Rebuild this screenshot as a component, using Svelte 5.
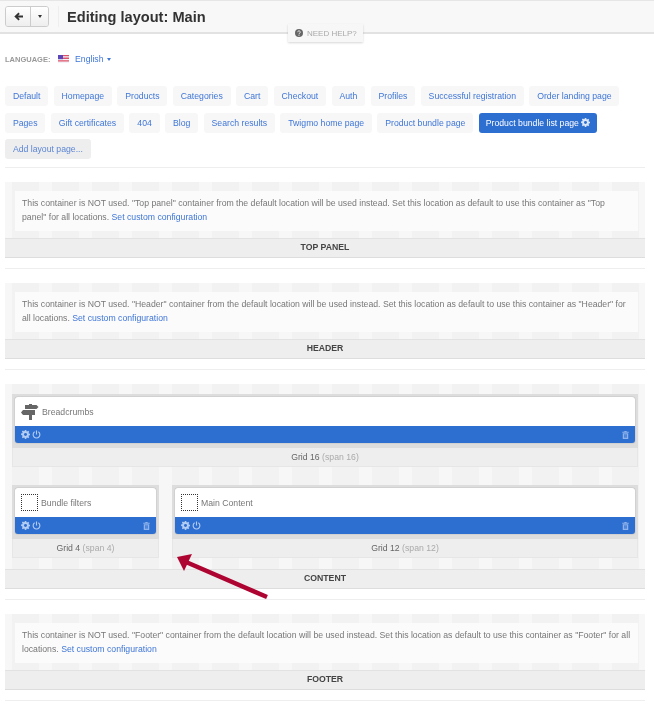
<script>
  const tabs = [
    "Default", "Homepage", "Products", "Categories", "Cart", "Checkout", "Auth", "Profiles",
    "Successful registration", "Order landing page", "Pages", "Gift certificates", "404",
    "Blog", "Search results", "Twigmo home page", "Product bundle page"
  ];
</script>

{#snippet cog(size = 9)}
  <svg class="icon" width={size} height={size} viewBox="0 0 16 16" aria-hidden="true">
    <path fill="currentColor" d="M6.600 0h2.800l.4 2.400 1.300.6 2-1.400 2 2-1.400 2 .6 1.300 2.400.4v2.800l-2.400.4-.6 1.300 1.400 2-2 2-2-1.400-1.300.6-.4 2.400H6.600l-.4-2.400-1.300-.6-2 1.400-2-2 1.400-2-.6-1.300L-.7 9.400v-2.800l2.400-.4.6-1.300-1.400-2 2-2 2 1.400 1.300-.6z" transform="translate(.7 0) scale(.92)"/>
    <circle cx="8" cy="8" r="2.600" class="hole"/>
  </svg>
{/snippet}

{#snippet power()}
  <svg class="icon" width="9" height="9" viewBox="0 0 16 16" aria-hidden="true">
    <path d="M4.700 3.200a6 6 0 1 0 6.600 0M8 .8v7" fill="none" stroke="currentColor" stroke-width="2"/>
  </svg>
{/snippet}

{#snippet trash()}
  <svg class="icon trash" width="7" height="8" viewBox="0 0 14 16" aria-hidden="true">
    <path fill="currentColor" d="M5 0h4l.6 1.500H13.500V3.500H.5V1.500H4.400zM1.500 4.500h11V16h-11zM4 6.500v7h1.300v-7zM6.400 6.500v7h1.200v-7zM8.700 6.500v7H10v-7z" fill-rule="evenodd"/>
  </svg>
{/snippet}

{#snippet block(name, wide = false)}
  <div class="block">
    <div class="block-body">
      {#if wide}
        <svg class="signpost" width="18" height="18" viewBox="0 0 18 18" aria-hidden="true">
          <path fill="#666" d="M8 1h3v1h4.500L17.500 4 15.500 6H4V2h4zM2 7h12v5H11v5H8v-5H2L0 9.500z"/>
        </svg>
      {:else}
        <span class="placeholder"></span>
      {/if}
      <span>{name}</span>
    </div>
    <div class="block-bar">
      {@render cog()}
      {@render power()}
      <span class="spacer"></span>
      {@render trash()}
    </div>
  </div>
{/snippet}

{#snippet unused(title)}
  <section class="container">
    <p class="notice">This container is NOT used. "{title}" container from the default location will be used instead. Set this location as default to use this container as "{title}" for all locations. <a href="#custom">Set custom configuration</a></p>
  </section>
  <div class="bar">{title}</div>
{/snippet}

<div class="page">
  <header class="topbar">
    <div class="btn-group">
      <button class="btn back" aria-label="Back">
        <svg width="9" height="9" viewBox="0 0 12 12"><path fill="#333" d="M6 0.800l1.700 1.700L5.400 4.800H12v2.600H5.400l2.300 2.300L6 11.400.4 6z"/></svg>
      </button>
      <button class="btn more" aria-label="More"><span class="caret dark"></span></button>
    </div>
    <h1>Editing layout: Main</h1>
  </header>

  <div class="help">
    <svg width="8" height="8" viewBox="0 0 16 16" aria-hidden="true">
      <circle cx="8" cy="8" r="8" fill="#666"/>
      <path d="M5.400 6.200a2.600 2.400 0 1 1 3.900 2.100c-.9.500-1.300.9-1.300 1.900" fill="none" stroke="#f7f7f7" stroke-width="1.800"/>
      <rect x="7" y="11.400" width="2" height="2" fill="#f7f7f7"/>
    </svg>
    NEED HELP?
  </div>

  <div class="language">
    <span class="lang-label">LANGUAGE:</span>
    <svg class="flag" width="11" height="8" viewBox="0 0 11 8" aria-hidden="true">
      <rect width="11" height="8" fill="#f2f2f6"/>
      <path d="M0 0h11v1.300H0zM0 2.600h11v1.300H0zM0 5.200h11v1.300H0z" fill="#e0526a"/>
      <rect width="5" height="4.200" fill="#5a46b8"/>
    </svg>
    <a href="#lang" class="lang-link">English <span class="caret"></span></a>
  </div>

  <nav class="tabs">
    {#each tabs as tab}
      <a href="#tab" class="tab">{tab}</a>
    {/each}
    <a href="#tab" class="tab active">Product bundle list page {@render cog(9)}</a>
    <a href="#add" class="tab add">Add layout page...</a>
  </nav>

  <hr />
  {@render unused("Top panel")}
  <hr />
  {@render unused("Header")}
  <hr />

  <section class="container grids">
    <div class="grid-col">
      <div class="grid-inner">{@render block("Breadcrumbs", true)}</div>
      <div class="grid-label">Grid 16 <em>(span 16)</em></div>
    </div>
    <div class="grid-row">
      <div class="grid-col narrow">
        <div class="grid-inner">{@render block("Bundle filters")}</div>
        <div class="grid-label">Grid 4 <em>(span 4)</em></div>
      </div>
      <div class="grid-col fill">
        <div class="grid-inner">{@render block("Main Content")}</div>
        <div class="grid-label">Grid 12 <em>(span 12)</em></div>
      </div>
    </div>
  </section>
  <div class="bar">Content</div>
  <hr />
  {@render unused("Footer")}
  <hr />

  <!-- annotation drawn over the screenshot -->
  <svg class="arrow" width="100" height="50" viewBox="170 550 100 50" aria-hidden="true">
    <path d="M186 562L267 597" stroke="#ae0432" stroke-width="4.500" fill="none"/>
    <path d="M177 557L192 554L184 571z" fill="#ae0432"/>
  </svg>
</div>

<style>
  :global(body) {
    background: #fff;
  }
  .page {
    position: relative;
    width: 654px;
    height: 706px;
    overflow: hidden;
    font-family: "Liberation Sans", Arial, sans-serif;
    font-size: 8.7px;
    color: #777;
    filter: blur(0.3px);
  }
  a {
    color: #3f76d8;
    text-decoration: none;
  }
  .topbar {
    height: 34px;
    box-sizing: border-box;
    display: flex;
    align-items: center;
    padding: 0 5px;
    background: #f8f8f8;
    border-top: 1px solid #e6e6e6;
    border-bottom: 2px solid #e2e2e2;
  }
  .btn-group {
    display: flex;
    height: 21px;
    box-sizing: border-box;
    border: 1px solid #ccc;
    border-radius: 3px;
    overflow: hidden;
    margin-right: 9px;
  }
  .btn {
    padding: 0;
    border: none;
    display: flex;
    align-items: center;
    justify-content: center;
    background: linear-gradient(#fff, #eee);
  }
  .back {
    width: 25px;
    border-right: 1px solid #ccc;
  }
  .more {
    width: 17px;
  }
  .caret {
    display: inline-block;
    vertical-align: middle;
    width: 0;
    height: 0;
    margin-left: 1px;
    border-left: 2.500px solid transparent;
    border-right: 2.500px solid transparent;
    border-top: 3px solid currentColor;
  }
  .caret.dark {
    color: #333;
  }
  h1 {
    margin: 0;
    padding-left: 8px;
    height: 21px;
    line-height: 23px;
    border-left: 1px solid #eee;
    font-size: 14.600px;
    font-weight: bold;
    color: #333;
  }
  .help {
    position: absolute;
    left: 288px;
    top: 24px;
    width: 75px;
    height: 18px;
    box-sizing: border-box;
    padding-left: 7px;
    display: flex;
    align-items: center;
    gap: 4px;
    background: #f7f7f7;
    box-shadow: 0 1px 2px rgba(0, 0, 0, 0.16);
    font-size: 8px;
    color: #aaa;
  }
  .language {
    display: flex;
    align-items: center;
    height: 16px;
    margin: 17px 0 0 5px;
  }
  .lang-label {
    width: 53px;
    font-size: 7.500px;
    font-weight: bold;
    color: #999;
  }
  .flag {
    margin-right: 6px;
  }
  .tabs {
    display: flex;
    flex-wrap: wrap;
    gap: 6.600px 5.400px;
    margin: 19px 9px 0 5px;
  }
  .tab {
    height: 20px;
    line-height: 20px;
    padding: 0 7.900px;
    border-radius: 3px;
    background: #f7f7f7;
    white-space: nowrap;
  }
  .tab.active {
    display: flex;
    align-items: center;
    gap: 2px;
    padding: 0 7px;
    background: #2d6ed1;
    color: #fff;
  }
  .tab.active .icon {
    color: #dce8fa;
  }
  .tab.active :global(.hole) {
    fill: #2d6ed1;
  }
  .tab.add {
    background: #eee;
    color: #5c86d4;
  }
  hr {
    height: 1px;
    border: none;
    background: #eee;
    margin: 8px 9px 14px 5px;
  }
  .container {
    margin: 0 9px 0 5px;
    padding: 9px 7px 7px 10px;
    background: repeating-linear-gradient(90deg, #f2f2f2 0, #f2f2f2 26.700px, #f7f7f7 26.700px, #f7f7f7 40px);
    background-position: 7px 0;
    background-color: #f7f7f7;
  }
  .notice {
    margin: 0;
    height: 40px;
    box-sizing: border-box;
    padding: 5px 7px;
    line-height: 14px;
    background: #fbfbfb;
  }
  .bar {
    height: 20px;
    line-height: 16px;
    box-sizing: border-box;
    margin: 0 9px 10px 5px;
    background: #eee;
    border-top: 1px solid #e2e2e2;
    border-bottom: 1px solid #ddd;
    text-align: center;
    font-weight: bold;
    text-transform: uppercase;
    color: #444;
  }
  .grids {
    padding: 10px 7px 11px 7px;
    display: flex;
    flex-direction: column;
    gap: 18px;
  }
  .grid-row {
    display: flex;
    gap: 13px;
  }
  .narrow {
    width: 147px;
    flex: none;
  }
  .fill {
    flex: 1;
  }
  .grid-inner {
    padding: 3px 3px 5px;
    background: #ddd;
  }
  .grid-label {
    height: 19px;
    line-height: 18px;
    box-sizing: border-box;
    background: #eee;
    border: 1px solid #e6e6e6;
    border-top: none;
    text-align: center;
    color: #666;
  }
  .grid-label em {
    font-style: normal;
    color: #aaa;
  }
  .block {
    border-radius: 3px;
    overflow: hidden;
    box-shadow: 0 0 1px #666;
  }
  .block-body {
    height: 29px;
    display: flex;
    align-items: center;
    gap: 3px;
    padding-left: 6px;
    background: #fff;
  }
  .signpost {
    flex: none;
  }
  .placeholder {
    width: 17px;
    height: 17px;
    box-sizing: border-box;
    border: 1px dotted #333;
  }
  .block-bar {
    height: 17px;
    display: flex;
    align-items: center;
    gap: 2px;
    padding: 0 6px 0 6px;
    background: #2d6ed1;
    color: #b4cdf2;
  }
  .block-bar :global(.hole) {
    fill: #2d6ed1;
  }
  .block-bar .trash {
    color: #8fb3ea;
  }
  .spacer {
    flex: 1;
  }
  .arrow {
    position: absolute;
    left: 170px;
    top: 550px;
  }
</style>
